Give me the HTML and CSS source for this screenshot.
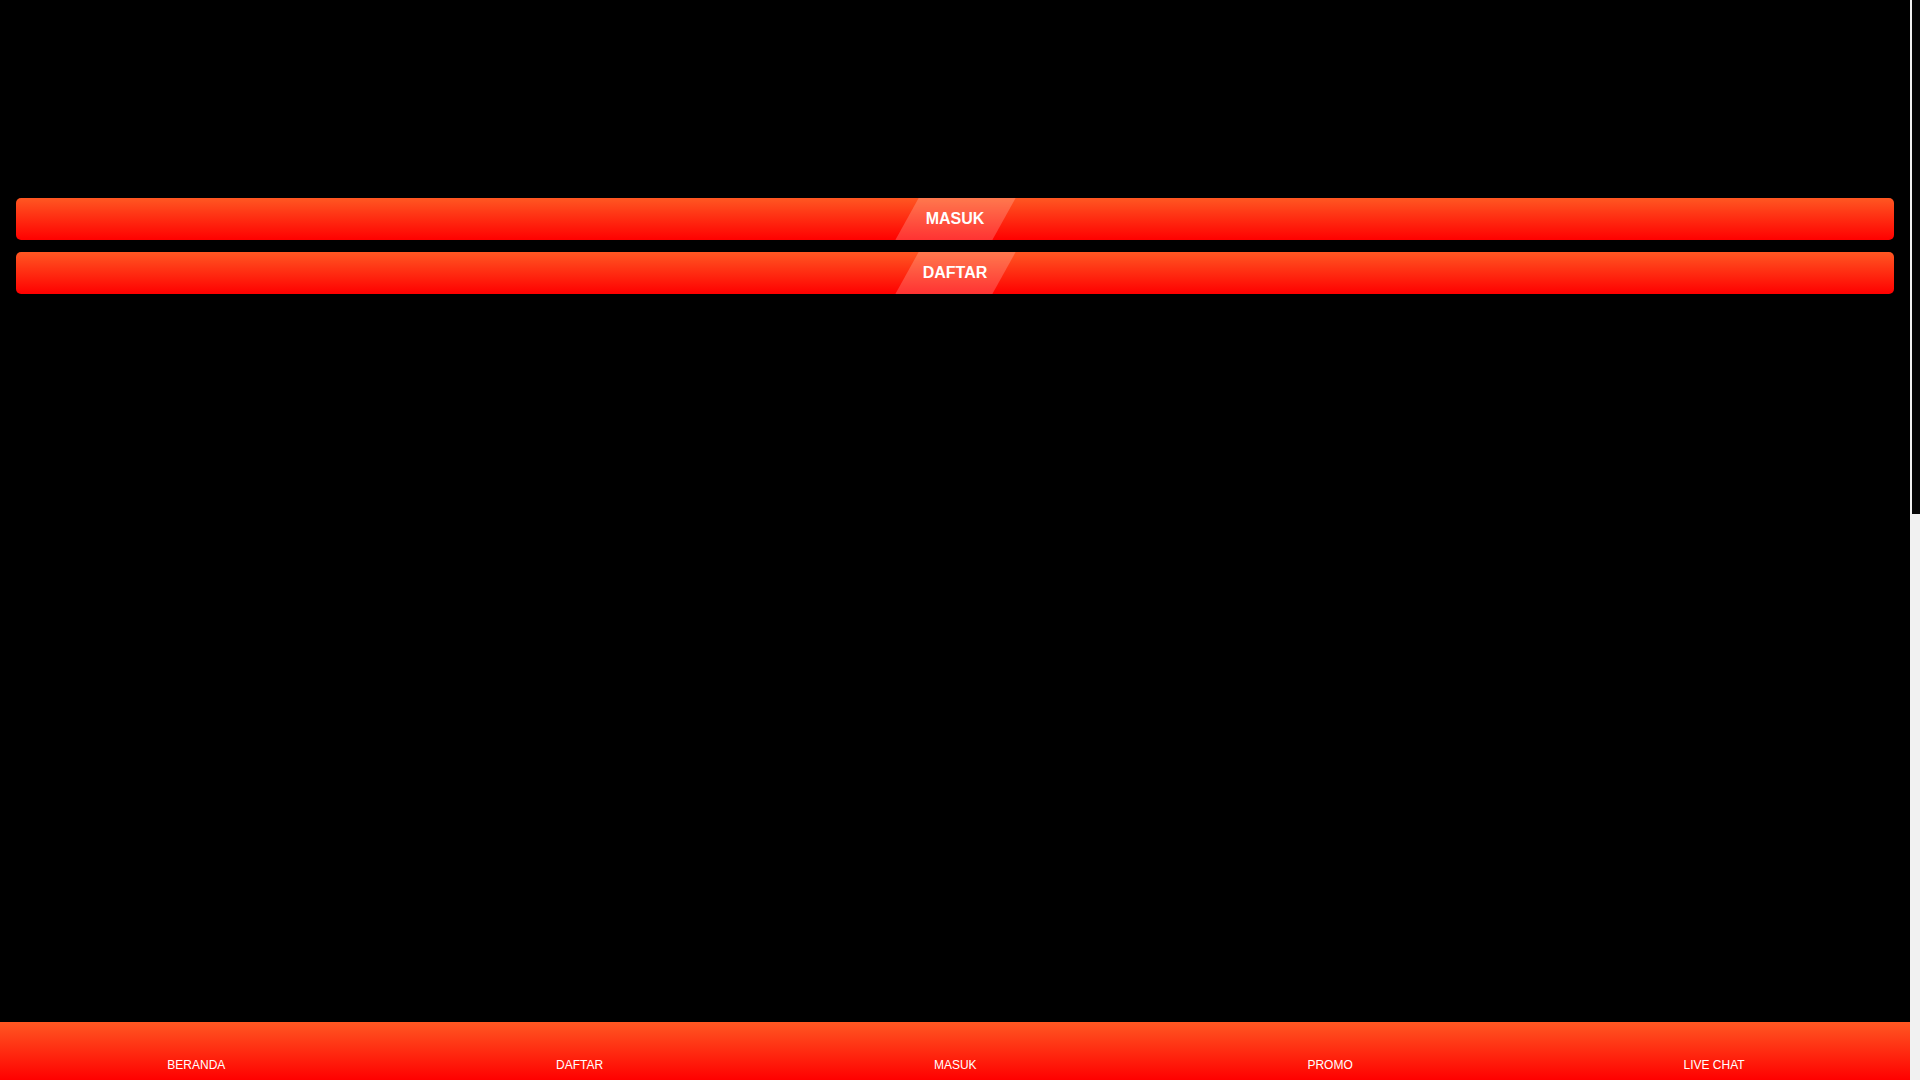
FILE: index.html
```html
<!DOCTYPE html>
<html lang="id">
<head>
<meta charset="utf-8">
<title>Masuk / Daftar</title>
<link rel="stylesheet" href="styles.css">
</head>
<body>
<div class="page">
  <header class="banner"></header>
  <div class="actions">
    <a class="btn" href="#"><span>MASUK</span></a>
    <a class="btn" href="#"><span>DAFTAR</span></a>
  </div>
  <main class="content"></main>
</div>
<nav class="bottom-nav">
  <a class="nav-item" href="#">BERANDA</a>
  <a class="nav-item" href="#">DAFTAR</a>
  <a class="nav-item" href="#">MASUK</a>
  <a class="nav-item" href="#">PROMO</a>
  <a class="nav-item" href="#">LIVE CHAT</a>
</nav>
<div class="scrollbar"><div class="scroll-thumb"></div></div>
</body>
</html>
```
FILE: styles.css
```css
html {
  background: #000;
}
body {
  margin: 0;
  background: #000;
  font-family: "Liberation Sans", Arial, sans-serif;
  color: #fff;
}
.page {
  margin-right: 10px;
}
.banner {
  height: 182px;
}
.actions {
  display: flex;
  flex-direction: column;
  gap: 12px;
  padding: 16px 16px 0 16px;
}
.btn {
  position: relative;
  display: flex;
  align-items: center;
  justify-content: center;
  height: 42px;
  border-radius: 5px;
  background: linear-gradient(to bottom, #ff5722, #ff0000);
  color: #fff;
  text-decoration: none;
  font-weight: bold;
  font-size: 16px;
  overflow: hidden;
}
.btn::before {
  content: "";
  position: absolute;
  top: 0;
  bottom: 0;
  left: 50%;
  width: 97px;
  margin-left: -48px;
  background: rgba(255, 255, 255, 0.2);
  transform: skewX(-29deg);
}
.btn span {
  position: relative;
}
.bottom-nav {
  position: fixed;
  left: 0;
  right: 10px;
  bottom: 0;
  height: 58px;
  display: flex;
  justify-content: space-around;
  padding-left: 2px;
  background: linear-gradient(to bottom, #ff5722, #ff0000);
}
.nav-item {
  padding-top: 36px;
  font-size: 12px;
  color: #fff;
  text-decoration: none;
  line-height: 14px;
}
.scrollbar {
  position: fixed;
  top: 0;
  right: 0;
  bottom: 0;
  width: 10px;
  background: #f1f1f1;
}
.scroll-thumb {
  height: 514px;
  margin-left: 2px;
  background: #050505;
}
```
